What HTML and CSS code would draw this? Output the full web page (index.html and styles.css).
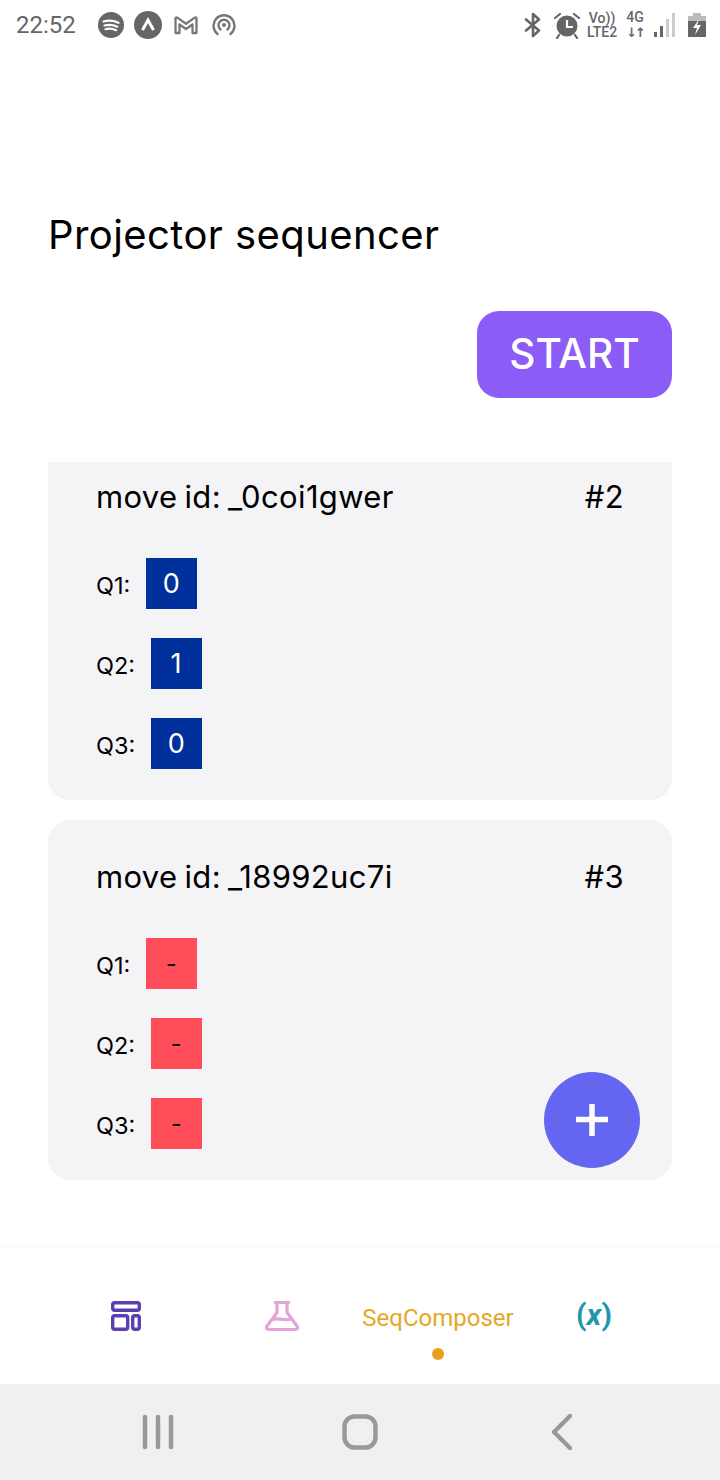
FILE: index.html
```html
<!DOCTYPE html>
<html lang="en">
<head>
    <meta charset="UTF-8">
    <meta name="viewport" content="width=device-width, initial-scale=1.0">
    <title>Projector sequencer</title>
    <link rel="stylesheet" href="styles.css">
</head>
<body>
    <div class="phone">
        <div class="status-bar">
            <div class="status-left">
                <span class="clock">22:52</span>
                <svg width="26" height="26" viewBox="0 0 26 26">
                    <circle cx="13" cy="13" r="13" fill="#666"/>
                    <path d="M5.500 9.500c5-1.400 10.500-1 15 1.300M6.500 13.500c4.200-1.100 9-.7 12.800 1.200M7.500 17.200c3.500-.9 7.300-.5 10.500 1" fill="none" stroke="#fff" stroke-width="2.200" stroke-linecap="round"/>
                </svg>
                <svg width="28" height="28" viewBox="0 0 28 28">
                    <circle cx="14" cy="14" r="14" fill="#666"/>
                    <path d="M8.500 19 14 9l5.500 10" fill="none" stroke="#fff" stroke-width="3"/>
                </svg>
                <svg class="mail-icon" width="24" height="20" viewBox="0 0 24 20">
                    <path d="M1.500 18V3.500c0-1 1-1.500 1.800-.9L12 8.800l8.700-6.200c.8-.6 1.800-.1 1.800.9V18h-4V9.500L12 14 5.500 9.500V18z" fill="none" stroke="#777" stroke-width="2.300" stroke-linejoin="round"/>
                </svg>
                <svg width="24" height="24" viewBox="0 0 24 24">
                    <path d="M5.500 21a10.500 10.500 0 1 1 13 0M8.500 16.500a5.500 5.500 0 1 1 7 0" fill="none" stroke="#777" stroke-width="2.400" stroke-linecap="round"/>
                    <circle cx="12" cy="12" r="2" fill="#777"/>
                </svg>
            </div>
            <div class="status-right">
                <svg class="bt-icon" width="18" height="26" viewBox="0 0 18 26">
                    <path d="M2 7.500 15 18.500 9 24V2l6 5.500L2 18.500" fill="none" stroke="#666" stroke-width="2.600" stroke-linejoin="round" stroke-linecap="round"/>
                </svg>
                <svg class="alarm-icon" width="28" height="28" viewBox="0 0 28 28">
                    <circle cx="14" cy="15" r="10.500" fill="#666"/>
                    <path d="M14 9v7h6" fill="none" stroke="#fff" stroke-width="2.200"/>
                    <path d="M2 7l5-4M26 7l-5-4M6 24l-2 3M22 24l2 3" fill="none" stroke="#666" stroke-width="2.200" stroke-linecap="round"/>
                </svg>
                <div class="net-label">
                    <span>Vo))</span>
                    <span>LTE2</span>
                </div>
                <div class="net-label net-4g">
                    <span>4G</span>
                    <span class="arrows">↓↑</span>
                </div>
                <svg class="signal-icon" width="22" height="26" viewBox="0 0 22 26">
                    <rect x="0" y="20" width="3" height="5" fill="#666"/>
                    <rect x="6" y="14" width="3" height="11" fill="#666"/>
                    <rect x="12" y="7" width="3" height="18" fill="#ccc"/>
                    <rect x="18" y="1" width="3" height="24" fill="#ccc"/>
                </svg>
                <svg width="18" height="24" viewBox="0 0 18 24">
                    <rect x="5" y="0" width="8" height="3" fill="#bbb"/>
                    <rect x="0" y="3" width="18" height="5" fill="#bbb"/>
                    <rect x="0" y="8" width="18" height="16" fill="#666"/>
                    <path d="M11 6 5 15h4l-2 7 6-10H9z" fill="#fff"/>
                </svg>
            </div>
        </div>

        <h1 class="title">Projector sequencer</h1>

        <div class="actions">
            <button type="button" class="start-btn">START</button>
        </div>

        <div class="moves">
            <div class="card card-scrolled">
                <div class="card-head">
                    <span>move id: _0coi1gwer</span>
                    <span>#2</span>
                </div>
                <div class="queue">
                    <span class="q-label">Q1:</span>
                    <span class="q-box q-set">0</span>
                </div>
                <div class="queue">
                    <span class="q-label">Q2:</span>
                    <span class="q-box q-set">1</span>
                </div>
                <div class="queue">
                    <span class="q-label">Q3:</span>
                    <span class="q-box q-set">0</span>
                </div>
            </div>

            <div class="card">
                <div class="card-head">
                    <span>move id: _18992uc7i</span>
                    <span>#3</span>
                </div>
                <div class="queue">
                    <span class="q-label">Q1:</span>
                    <span class="q-box q-empty">-</span>
                </div>
                <div class="queue">
                    <span class="q-label">Q2:</span>
                    <span class="q-box q-empty">-</span>
                </div>
                <div class="queue">
                    <span class="q-label">Q3:</span>
                    <span class="q-box q-empty">-</span>
                </div>
            </div>

            <button type="button" class="fab">
                <svg width="32" height="34" viewBox="0 0 32 34">
                    <path d="M16 1v32M0 16.500h32" stroke="#fff" stroke-width="5.500" fill="none"/>
                </svg>
            </button>
        </div>

        <div class="tabs">
            <div class="tab">
                <svg class="tab-icon" width="30" height="30" viewBox="0 0 30 30">
                    <g fill="none" stroke="#5b3fb0" stroke-width="3.400">
                        <rect x="1.700" y="1.700" width="26.600" height="7.600" rx="2"/>
                        <rect x="1.700" y="14.700" width="15" height="13.600" rx="2"/>
                        <rect x="21.700" y="14.700" width="6.600" height="13.600" rx="2"/>
                    </g>
                </svg>
            </div>
            <div class="tab">
                <svg class="tab-icon" width="36" height="30" viewBox="0 0 36 30">
                    <path d="M10 1.500h16M13 1.500v10L3 25c-1.500 2.500 0 3.500 2.500 3.500h25c2.500 0 4-1 2.500-3.500L23 11.500v-10M8 19c5-3 8 1 20-1" fill="none" stroke="#e3a5d8" stroke-width="3.200" stroke-linejoin="round"/>
                </svg>
            </div>
            <div class="tab">
                <span class="tab-name">SeqComposer</span>
                <span class="tab-dot"></span>
            </div>
            <div class="tab">
                <span class="var-text">(<i>x</i>)</span>
            </div>
        </div>

        <div class="nav-bar">
            <svg width="34" height="36" viewBox="0 0 34 36">
                <path d="M3 3v30M16 3v30M29 3v30" stroke="#999" stroke-width="4.500" stroke-linecap="round"/>
            </svg>
            <svg width="36" height="36" viewBox="0 0 36 36">
                <rect x="2.500" y="2.500" width="31" height="31" rx="10" fill="none" stroke="#999" stroke-width="4.500"/>
            </svg>
            <svg width="28" height="36" viewBox="-7 0 28 36">
                <path d="M19 2 3 18l16 16" fill="none" stroke="#999" stroke-width="4.500" stroke-linecap="round" stroke-linejoin="round"/>
            </svg>
        </div>
    </div>
</body>
</html>
```

FILE: styles.css
```css
body {
    margin: 0;
    font-family: 'Inter', 'Liberation Sans', sans-serif;
    background-color: #ffffff;
    color: #000000;
}
.phone {
    width: 720px;
    height: 1480px;
    display: flex;
    flex-direction: column;
    overflow: hidden;
}

/* status bar */
.status-bar {
    height: 50px;
    flex: none;
    display: flex;
    justify-content: space-between;
    align-items: center;
    padding: 0 14px 0 16px;
    box-sizing: border-box;
    color: #666;
}
.status-left, .status-right {
    display: flex;
    align-items: center;
}
.status-left {
    gap: 10px;
}
.status-right {
    gap: 9px;
}
.clock {
    font-family: 'Roboto', sans-serif;
    font-size: 24px;
    margin-right: 12px;
}
.mail-icon {
    margin: 0 4px 0 2px;
}
.bt-icon {
    margin-right: 2px;
}
.alarm-icon {
    margin-right: -3px;
}
.signal-icon {
    margin: 0 3px 0 1px;
}
.net-label {
    display: flex;
    flex-direction: column;
    align-items: center;
    font-family: 'Roboto', sans-serif;
    font-size: 14px;
    font-weight: 500;
    line-height: 14px;
}
.net-4g {
    gap: 2px;
    line-height: 13px;
}
.net-label .arrows {
    font-family: 'DejaVu Sans', sans-serif;
    font-size: 13px;
    font-weight: bold;
    letter-spacing: -2px;
}

/* heading */
.title {
    margin: 0;
    padding: 158px 0 0 48px;
    height: 54px;
    font-size: 40px;
    font-weight: 400;
    letter-spacing: 0.42px;
    line-height: 54px;
    flex: none;
}
.actions {
    display: flex;
    justify-content: flex-end;
    padding: 49px 48px 0 0;
    flex: none;
}
.start-btn {
    width: 195px;
    height: 87px;
    padding: 0 0 2px;
    border: none;
    border-radius: 22px;
    background-color: #8b5cf6;
    color: #ffffff;
    font-family: inherit;
    font-size: 40.5px;
    font-weight: 500;
}

/* sequence list */
.moves {
    position: relative;
    margin: 64px 48px 0;
    height: 784px;
    flex: none;
}
.card {
    background-color: #f4f4f7;
    border-radius: 22px;
    padding: 34px 48px 31px;
    margin-bottom: 20px;
}
.card-scrolled {
    border-radius: 0 0 22px 22px;
    padding-top: 12px;
}
.card-head {
    display: flex;
    justify-content: space-between;
    font-size: 31px;
    letter-spacing: 0.35px;
    word-spacing: -2px;
    line-height: 46px;
    margin-bottom: 38px;
}
.queue {
    display: flex;
    align-items: center;
    gap: 15.5px;
    height: 51px;
    margin-bottom: 29px;
    font-size: 23.5px;
}
.queue:last-child {
    margin-bottom: 0;
}
.q-label {
    padding-top: 3px;
}
.q-box {
    width: 51px;
    height: 51px;
    display: flex;
    align-items: center;
    justify-content: center;
    font-size: 27px;
}
.q-set {
    background-color: #00309c;
    color: #ffffff;
}
.q-empty {
    background-color: #ff4d5a;
    color: #000000;
    font-size: 23px;
}
.fab {
    position: absolute;
    right: 32px;
    top: 610px;
    width: 96px;
    height: 96px;
    padding: 0;
    border: none;
    border-radius: 50%;
    background-color: #6366f1;
    display: flex;
    align-items: center;
    justify-content: center;
}

/* bottom tabs */
.tabs {
    height: 138px;
    flex: none;
    box-sizing: border-box;
    display: flex;
    padding: 0 48px;
    border-top: 1px solid #f7f7f8;
    box-shadow: 0 -3px 5px rgba(0, 0, 0, 0.015);
}
.tab {
    flex: 1;
    display: flex;
    flex-direction: column;
    align-items: center;
    padding-top: 53px;
}
.tab-icon {
    margin-top: 1px;
}
.tab-name {
    font-family: 'Roboto', sans-serif;
    font-size: 24px;
    line-height: 36px;
    color: #e5a823;
}
.tab-dot {
    width: 12px;
    height: 12px;
    margin-top: 12px;
    border-radius: 50%;
    background-color: #e5a01c;
}
.var-text {
    font-family: 'Roboto', sans-serif;
    font-size: 30px;
    font-weight: 700;
    line-height: 30px;
    color: #1e96ac;
}

/* android nav */
.nav-bar {
    flex: 1;
    background-color: #f0f0f0;
    display: flex;
    justify-content: space-between;
    align-items: center;
    padding: 0 148px 0 142px;
}
```
